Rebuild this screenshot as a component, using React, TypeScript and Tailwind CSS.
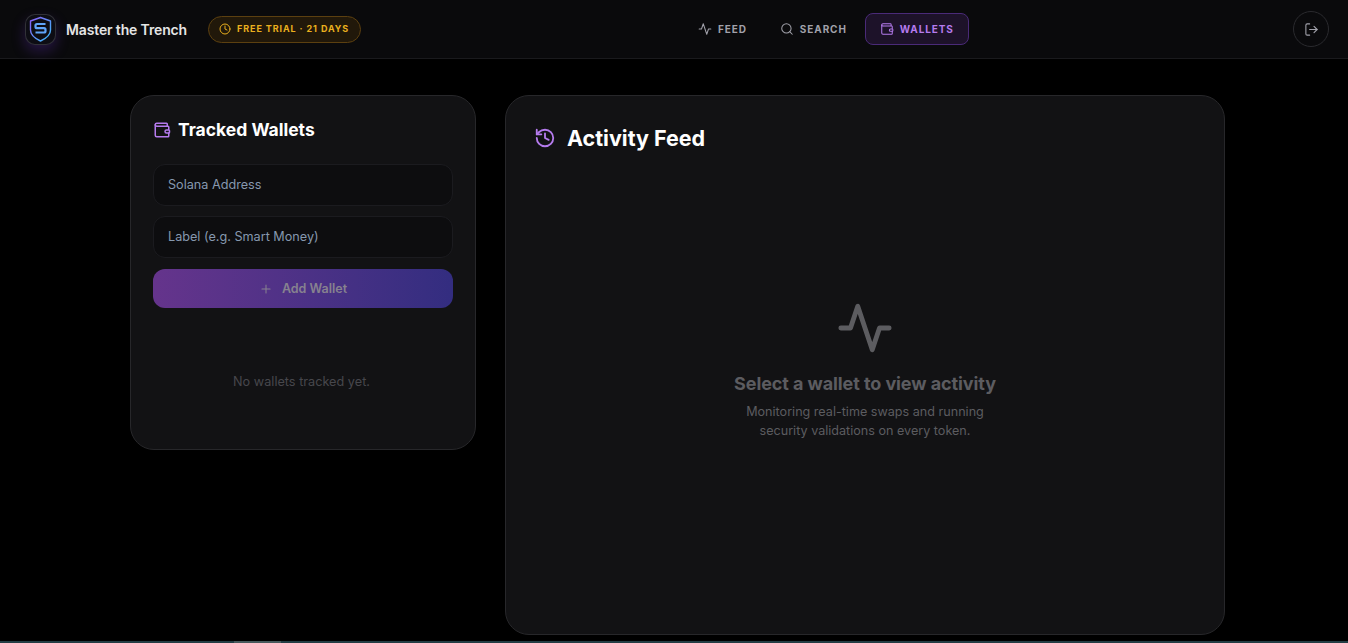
import { Clock, History, LogOut, Plus, Search, Wallet } from "lucide-react";

const sans = "font-['Inter',sans-serif]";

function Pulse({ size, strokeWidth, className }: { size: number; strokeWidth: number; className?: string }) {
  return (
    <svg width={size} height={size} viewBox="0 0 24 24" fill="none" stroke="currentColor" strokeWidth={strokeWidth} strokeLinecap="round" strokeLinejoin="round" className={className}>
      <polyline points="22 12 18 12 15 21 9 3 6 12 2 12" />
    </svg>
  );
}

function Logo() {
  return (
    <div className="relative flex h-[31px] w-[31px] items-center justify-center rounded-[10px] border border-white/15 bg-[#0d0d14] shadow-[0_6px_14px_rgba(124,58,237,0.25)]">
      <svg width="23" height="26" viewBox="0 0 23 26" fill="none">
        <defs>
          <linearGradient id="shield" x1="0" y1="0" x2="1" y2="1">
            <stop offset="0" stopColor="#8b5cf6" />
            <stop offset="1" stopColor="#38bdf8" />
          </linearGradient>
        </defs>
        <path d="M11.5 1.5 21.5 5v9c0 5-4.5 8.500-10 11C6 22.500 1.500 19 1.500 14V5z" stroke="url(#shield)" strokeWidth="1.400" strokeLinejoin="round" />
        <path d="M16.500 8H8a1.500 1.500 0 0 0-1.500 1.500v1.200A1.500 1.500 0 0 0 8 12.200h7a1.500 1.500 0 0 1 1.500 1.500v1.300A1.500 1.500 0 0 1 15 16.500H6.500" stroke="#60a5fa" strokeWidth="2.200" />
      </svg>
    </div>
  );
}

function NavItem({ icon, label, active }: { icon: React.ReactNode; label: string; active?: boolean }) {
  return (
    <div
      className={
        active
          ? "flex h-8 items-center gap-[6px] rounded-lg border border-[#4a2a78] bg-[#1d1229] px-[14px] text-[#b57bee]"
          : "flex h-8 items-center gap-[6px] rounded-lg border border-transparent px-[14px] text-[#a1a1aa]"
      }
    >
      {icon}
      <span className="text-[10px] font-bold tracking-[0.09em]">{label}</span>
    </div>
  );
}

function Field({ placeholder }: { placeholder: string }) {
  return (
    <div className="flex h-[42px] items-center rounded-xl border border-[#1b1b1f] bg-[#0d0d0f] px-[14px] text-[12.650px] text-[#8698ae]">
      {placeholder}
    </div>
  );
}

export default function App() {
  return (
    <div className={`relative h-[643px] overflow-hidden bg-black ${sans}`}>
      <header className="flex h-[59px] items-center border-b border-[#1a1a1d] bg-[#0a0a0c] pl-[25px] pr-[19px]">
        <div className="flex w-[340px] items-center">
          <Logo />
          <span className="ml-[10px] text-[14px] font-semibold tracking-[-0.01em] text-[#e5e5e5]">Master the Trench</span>
          <div className="ml-[21px] flex h-[27px] items-center gap-[6px] rounded-full border border-[#5c4010] bg-[#21180a] pl-[10px] pr-[11px] text-[#eab01e]">
            <Clock size={12} strokeWidth={2} />
            <span className="text-[9px] font-bold tracking-[0.1em] whitespace-nowrap">FREE TRIAL · 21 DAYS</span>
          </div>
        </div>
        <nav className="ml-[318px] flex items-center gap-[3px]">
          <NavItem icon={<Pulse size={14} strokeWidth={1.75} />} label="FEED" />
          <NavItem icon={<Search size={14} strokeWidth={1.75} />} label="SEARCH" />
          <NavItem icon={<Wallet size={14} strokeWidth={1.75} />} label="WALLETS" active />
        </nav>
        <div className="ml-auto flex h-9 w-9 items-center justify-center rounded-full border border-[#2a2a2e] text-[#a1a1aa]">
          <LogOut size={15} strokeWidth={1.75} />
        </div>
      </header>

      <main className="flex items-start gap-[29px] pl-[130px] pt-[36px]">
        <section className="flex h-[355px] w-[346px] flex-col rounded-[24px] border border-[#27272a] bg-[#121214] px-[22px] pt-[21px]">
          <div className="flex items-center gap-[7px]">
            <Wallet size={18} strokeWidth={2} className="text-[#b57bee]" />
            <h2 className="text-[17.500px] font-bold text-white">Tracked Wallets</h2>
          </div>
          <div className="mt-[21px] flex flex-col gap-[10px]">
            <Field placeholder="Solana Address" />
            <Field placeholder="Label (e.g. Smart Money)" />
          </div>
          <div className="mt-[11px] flex h-[39px] items-center justify-center gap-[9px] rounded-xl bg-gradient-to-r from-[#65348c] to-[#332d80] pt-px text-[#87828f]">
            <Plus size={14} strokeWidth={1.75} />
            <span className="text-[12.500px] font-semibold">Add Wallet</span>
          </div>
          <p className="mt-[64px] pr-[3px] text-center text-[12.700px] text-[#47474c]">No wallets tracked yet.</p>
        </section>

        <section className="flex h-[540px] w-[720px] flex-col rounded-[24px] border border-[#27272a] bg-[#121214]">
          <div className="flex items-center gap-[11px] pl-[28px] pt-[29px]">
            <History size={22} strokeWidth={2} className="text-[#b57bee]" />
            <h2 className="text-[21.500px] leading-[26px] font-bold text-white">Activity Feed</h2>
          </div>
          <div className="flex flex-col items-center pt-[148px]">
            <Pulse size={58} strokeWidth={2} className="text-[#5c5c60]" />
            <h3 className="mt-[13px] text-[18px] font-bold tracking-[-0.005em] text-[#5c5c60]">Select a wallet to view activity</h3>
            <p className="mt-[5px] w-[260px] text-center text-[12.600px] leading-[19px] text-[#5c5c60]">
              Monitoring real-time swaps and running security validations on every token.
            </p>
          </div>
        </section>
      </main>

      <div className="absolute inset-x-0 bottom-0 h-[2px] bg-[#233d44]">
        <div className="ml-[234px] h-full w-[47px] bg-[#47595c]" />
      </div>
    </div>
  );
}
